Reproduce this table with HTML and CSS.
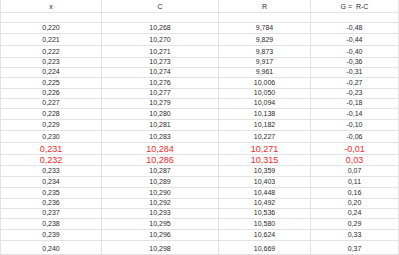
FILE: index.html
```html
<!DOCTYPE html>
<html>
<head>
<meta charset="utf-8">
<link rel="stylesheet" href="styles.css">
</head>
<body>
<div class="sheet">
  <div class="c first">x</div><div class="c">C</div><div class="c">R</div><div class="c">G =&nbsp; R-C</div>
  <div class="c first"></div><div class="c"></div><div class="c"></div><div class="c"></div>
  <div class="c first">0,220</div><div class="c">10,268</div><div class="c">9,784</div><div class="c">-0,48</div>
  <div class="c first">0,221</div><div class="c">10,270</div><div class="c">9,829</div><div class="c">-0,44</div>
  <div class="c first">0,222</div><div class="c">10,271</div><div class="c">9,873</div><div class="c">-0,40</div>
  <div class="c first">0,223</div><div class="c">10,273</div><div class="c">9,917</div><div class="c">-0,36</div>
  <div class="c first">0,224</div><div class="c">10,274</div><div class="c">9,961</div><div class="c">-0,31</div>
  <div class="c first">0,225</div><div class="c">10,276</div><div class="c">10,006</div><div class="c">-0,27</div>
  <div class="c first">0,226</div><div class="c">10,277</div><div class="c">10,050</div><div class="c">-0,23</div>
  <div class="c first">0,227</div><div class="c">10,279</div><div class="c">10,094</div><div class="c">-0,18</div>
  <div class="c first">0,228</div><div class="c">10,280</div><div class="c">10,138</div><div class="c">-0,14</div>
  <div class="c first">0,229</div><div class="c">10,281</div><div class="c">10,182</div><div class="c">-0,10</div>
  <div class="c first">0,230</div><div class="c">10,283</div><div class="c">10,227</div><div class="c">-0,06</div>
  <div class="c first hl">0,231</div><div class="c hl">10,284</div><div class="c hl">10,271</div><div class="c hl">-0,01</div>
  <div class="c first hl">0,232</div><div class="c hl">10,286</div><div class="c hl">10,315</div><div class="c hl">0,03</div>
  <div class="c first">0,233</div><div class="c">10,287</div><div class="c">10,359</div><div class="c">0,07</div>
  <div class="c first">0,234</div><div class="c">10,289</div><div class="c">10,403</div><div class="c">0,11</div>
  <div class="c first">0,235</div><div class="c">10,290</div><div class="c">10,448</div><div class="c">0,16</div>
  <div class="c first">0,236</div><div class="c">10,292</div><div class="c">10,492</div><div class="c">0,20</div>
  <div class="c first">0,237</div><div class="c">10,293</div><div class="c">10,536</div><div class="c">0,24</div>
  <div class="c first">0,238</div><div class="c">10,295</div><div class="c">10,580</div><div class="c">0,29</div>
  <div class="c first">0,239</div><div class="c">10,296</div><div class="c">10,624</div><div class="c">0,33</div>
  <div class="c first">0,240</div><div class="c">10,298</div><div class="c">10,669</div><div class="c">0,37</div>
</div>
</body>
</html>
```
FILE: styles.css
```css
html, body {
  margin: 0;
  padding: 0;
  background: #ffffff;
}
.sheet {
  display: grid;
  grid-template-columns: 102px 117px 92px 88px;
  grid-template-rows: 13px 10px 11px 12px 12px 10px 10px 11px 10px 10px 11px 11px 12px 12px 11px 11px 11px 11px 10px 10px 11px 11px 14px;
  font-family: "Liberation Sans", Arial, sans-serif;
  font-size: 7px;
  color: #2b2b2b;
}
.c {
  box-sizing: border-box;
  border-right: 1px solid #e3e3e3;
  border-bottom: 1px solid #e3e3e3;
  display: flex;
  align-items: flex-end;
  justify-content: center;
  padding-bottom: 1px;
  line-height: 8px;
  white-space: nowrap;
}
.first {
  border-left: 1px solid #e3e3e3;
}
.hl {
  color: #f52a2a;
  font-size: 9px;
  line-height: 10px;
  padding-bottom: 0;
}
```
